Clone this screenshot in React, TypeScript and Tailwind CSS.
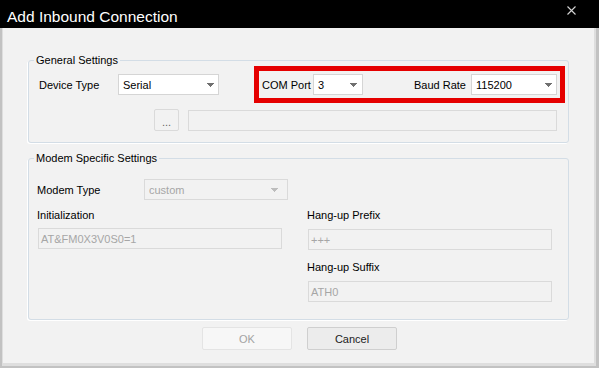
import React from "react";

function Arrow({ color }: { color: string }) {
  return (
    <svg width="7" height="4" viewBox="0 0 7 4" className="shrink-0">
      <path d="M0 0h7v1h-1v1h-1v1h-1v1h-1v-1h-1v-1h-1v-1h-1z" fill={color} />
    </svg>
  );
}

function Select({
  width,
  value,
  disabled,
  arrowRight,
}: {
  width: string;
  value: string;
  disabled?: boolean;
  arrowRight?: string;
}) {
  return (
    <div
      className={`${width} h-[21px] shrink-0 flex items-center justify-between pl-[4px] ${
        arrowRight ?? "pr-[4px]"
      } border ${
        disabled
          ? "bg-[#f2f2f2] border-[#dadada] text-[#a6a6a6]"
          : "bg-white border-[#d5d5d5] text-black"
      }`}
    >
      <span className="leading-[14px]">{value}</span>
      <Arrow color={disabled ? "#bdbdbd" : "#707070"} />
    </div>
  );
}

function Input({ value, className }: { value: string; className: string }) {
  return (
    <div
      className={`${className} h-[21px] flex items-center pl-[2px] border border-[#dadada] bg-[#f2f2f2] text-[#a6a6a6]`}
    >
      <span className="leading-[14px]">{value}</span>
    </div>
  );
}

export default function App() {
  return (
    <div className="w-[599px] h-[368px] flex flex-col bg-black font-['Liberation_Sans',Arial,sans-serif] text-[11px] text-black overflow-hidden">
      <div className="h-[28px] flex items-start shrink-0 bg-black">
        <span className="pl-[7px] pt-[8px] text-[15.5px] leading-[18px] text-white">
          Add Inbound Connection
        </span>
        <svg
          className="ml-auto mr-[23px] mt-[6px]"
          width="9"
          height="9"
          viewBox="0 0 9 9"
        >
          <path
            d="M0.5 0.5L8.5 8.5M8.5 0.5L0.5 8.5"
            stroke="#d4d4d4"
            strokeWidth="1.1"
          />
        </svg>
      </div>
      <div className="flex-1 flex flex-col border-l-2 border-r-[3px] border-b-2 border-[#c2c2c2]">
        <div className="flex-1 flex flex-col bg-[#f2f2f2] border-l border-r-2 border-b-[3px] border-[#dedede]">
          <div className="pt-[25px] px-[25px]">
            <fieldset className="border border-[#d3dde6] rounded-[3px] shadow-[-1px_1px_0_#ffffff] pb-[11px]">
              <legend className="ml-[5px] px-[2px] leading-[14px]">General Settings</legend>
              <div className="flex items-center mt-[-1px] pl-[10px] h-[37px]">
                <span className="w-[79px] leading-[14px]">Device Type</span>
                <Select width="w-[101px]" value="Serial" />
                <div className="ml-[35px] w-[311px] h-[37px] border-[5px] border-[#e50000] flex items-center pl-[3px]">
                  <span className="w-[51px] leading-[14px]">COM Port</span>
                  <Select width="w-[50px]" value="3" arrowRight="pr-[5px]" />
                  <span className="ml-[51px] w-[57px] leading-[14px]">Baud Rate</span>
                  <Select width="w-[86px]" value="115200" />
                </div>
              </div>
              <div className="flex items-start mt-[6px] pl-[125px]">
                <button className="w-[25px] h-[22px] border border-[#dadada] rounded-[2px] bg-[#f2f2f2] text-[#666666] leading-[14px] pt-[4px]">
                  ...
                </button>
                <div className="ml-[9px] mt-[1px] w-[369px] h-[21px] border border-[#dadada] bg-[#f2f2f2]" />
              </div>
            </fieldset>

            <fieldset className="mt-[8px] border border-[#d3dde6] rounded-[3px] shadow-[-1px_1px_0_#ffffff] pb-[17px]">
              <legend className="ml-[5px] px-[2px] leading-[14px]">Modem Specific Settings</legend>
              <div className="flex items-center mt-[14px] pl-[8px]">
                <span className="w-[107px] leading-[14px]">Modem Type</span>
                <Select width="w-[144px]" value="custom" disabled arrowRight="pr-[9px]" />
              </div>
              <div className="flex pl-[8px] mt-[8px]">
                <div className="w-[270px] flex flex-col">
                  <span className="leading-[14px]">Initialization</span>
                  <Input value="AT&FM0X3V0S0=1" className="mt-[6px] ml-[1px] w-[244px]" />
                </div>
                <div className="flex flex-col">
                  <span className="leading-[14px]">Hang-up Prefix</span>
                  <Input value="+++" className="mt-[7px] ml-[1px] w-[244px]" />
                  <span className="mt-[10px] leading-[14px]">Hang-up Suffix</span>
                  <Input value="ATH0" className="mt-[7px] ml-[1px] w-[244px]" />
                </div>
              </div>
            </fieldset>
          </div>
          <div className="flex justify-center gap-[15px] mt-[7px] pl-[2px]">
            <button className="w-[90px] h-[23px] rounded-[2px] border border-[#e4e4e4] bg-[#f7f7f7] text-[#a3a3a3] leading-[14px]">
              OK
            </button>
            <button className="w-[90px] h-[23px] rounded-[2px] border border-[#cfcfcf] bg-[#ececec] text-[#222222] leading-[14px]">
              Cancel
            </button>
          </div>
        </div>
      </div>
    </div>
  );
}
